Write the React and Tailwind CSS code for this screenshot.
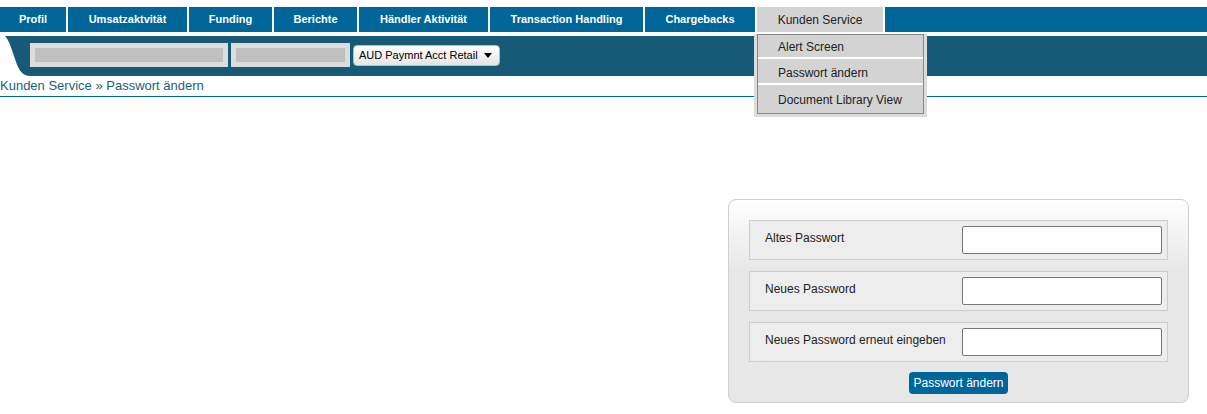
import React from 'react';

const tabs = [
  { label: 'Profil', w: 'w-[66px]' },
  { label: 'Umsatzaktvität', w: 'w-[119px]' },
  { label: 'Funding', w: 'w-[83px]' },
  { label: 'Berichte', w: 'w-[83px]' },
  { label: 'Händler Aktivität', w: 'w-[129px]' },
  { label: 'Transaction Handling', w: 'w-[153px]' },
  { label: 'Chargebacks', w: 'w-[110px]' },
];

const fields = ['Altes Passwort', 'Neues Password', 'Neues Password erneut eingeben'];

export default function App() {
  return (
    <div className="relative min-h-[414px] bg-white font-['Liberation_Sans',Arial,sans-serif] text-[12px]">
      {/* Top navigation */}
      <div className="pt-[7px] flex gap-[2px] h-[32px]">
        {tabs.map(t => (
          <div
            key={t.label}
            className={`${t.w} h-[25px] bg-[#006699] text-white text-[11px] font-bold flex items-center justify-center`}
          >
            {t.label}
          </div>
        ))}
        <div className="w-[126px] h-[25px] bg-[#d3d3d3] text-[#222] flex items-center justify-center">
          Kunden Service
        </div>
        <div className="flex-1 h-[25px] bg-[#006699]" />
      </div>

      {/* Account bar */}
      <div className="mt-[4px] flex h-[40px]">
        <svg width="32" height="40" viewBox="0 0 32 40" className="shrink-0">
          <path d="M5 0 L32 0 L32 40 L31 40 C22 40 19 34 16 26 C12 14 9 4 5 0 Z" fill="#175a78" />
        </svg>
        <div className="flex-1 bg-[#175a78] flex items-start pt-[7px] -ml-[2px]">
          <div className="w-[198px] h-[24px] bg-[#dcdcdc] p-[5px]">
            <div className="h-full bg-[#c0c0c0]" />
          </div>
          <div className="w-[119px] h-[24px] bg-[#dcdcdc] p-[5px] ml-[3px]">
            <div className="h-full bg-[#c0c0c0]" />
          </div>
          <button className="ml-[3px] mt-[2px] h-[21px] w-[147px] shrink-0 whitespace-nowrap rounded-[4px] border border-[#bbb] bg-gradient-to-b from-white to-[#e4e4e4] text-black text-[11px] flex items-center pl-[5px]">
            AUD Paymnt Acct Retail
            <span className="ml-[6px] w-0 h-0 border-l-[4px] border-r-[4px] border-t-[5px] border-l-transparent border-r-transparent border-t-black" />
          </button>
        </div>
      </div>

      {/* Breadcrumb */}
      <div className="h-[21px] border-b border-[#006a9f] text-[13px] text-[#1e5d7d] leading-[19px]">
        Kunden Service » Passwort ändern
      </div>

      {/* Password form */}
      <div className="ml-[728px] mt-[102px] w-[461px] h-[204px] rounded-[8px] border border-[#cfcfcf] bg-gradient-to-b from-white to-[#e7e7e7] to-[35%] px-[20px] pt-[20px]">
        <div className="flex flex-col gap-[11px]">
          {fields.map(f => (
            <div
              key={f}
              className="h-[40px] border border-[#cdcdcd] bg-[#ededed] flex items-center justify-between pl-[15px] pr-[5px]"
            >
              <span className="text-[#222] -mt-[4px]">{f}</span>
              <input
                type="password"
                className="w-[200px] h-[28px] border border-[#777] rounded-[2px] bg-white"
              />
            </div>
          ))}
        </div>
        <div className="flex justify-center mt-[10px]">
          <button className="h-[22px] px-[4px] rounded-[4px] bg-[#006699] text-white text-[12px]">
            Passwort ändern
          </button>
        </div>
      </div>

      {/* Open dropdown */}
      <div className="absolute left-[754px] top-[34px] w-[173px] bg-[#dcdcdc] pb-[3px] px-[3px]">
        <div className="border border-[#888] bg-[#d3d3d3] flex flex-col gap-[2px] pb-[2px]">
          {['Alert Screen', 'Passwort ändern', 'Document Library View'].map((item, i) => (
            <div
              key={item}
              className={`h-[24px] bg-[#d3d3d3] text-[#222] pl-[20px] pt-[1px] flex items-center ${i < 2 ? 'border-b-2 border-white' : ''}`}
            >
              {item}
            </div>
          ))}
        </div>
      </div>
    </div>
  );
}
